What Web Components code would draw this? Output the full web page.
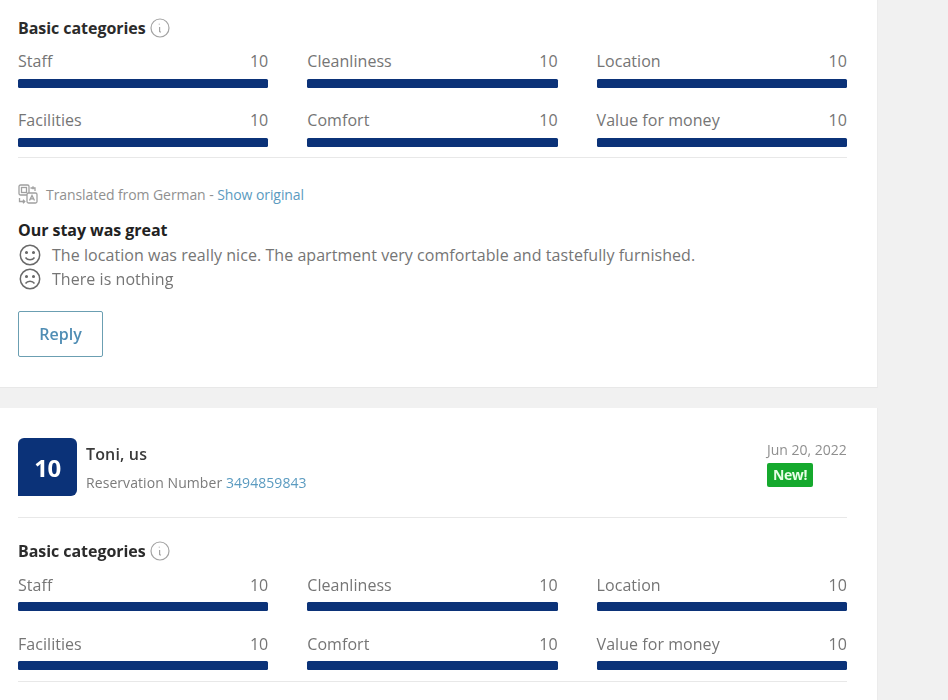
<!DOCTYPE html>
<html lang="en"><head><meta charset="utf-8"><title>Reviews</title>
<style>
html,body{margin:0;height:700px;overflow:hidden;background:#f1f1f1;font-family:"Open Sans","Noto Sans",sans-serif;color:#6b6b6b}
</style></head><body>
<review-list>
<review-card>
  <category-block></category-block>
  <review-body></review-body>
</review-card>
<review-card class="open">
  <review-head name="Toni, us" reservation="3494859843" date="Jun 20, 2022" score="10"></review-head>
  <category-block second></category-block>
</review-card>
</review-list>
<script>
class ReviewList extends HTMLElement{constructor(){super();this.attachShadow({mode:'open'}).innerHTML=`<style>:host{display:flex;flex-direction:column;gap:20px;width:878px;filter:blur(.4px)}</style><slot></slot>`}}
class ReviewCard extends HTMLElement{constructor(){super();this.attachShadow({mode:'open'}).innerHTML=`<style>:host{display:block;background:#fff;padding:0 30px 0 18px;border-bottom:1px solid #e8e8e8;border-right:1px solid #ececec;box-sizing:border-box;width:878px}:host(.open){min-height:320px}</style><slot></slot>`}}
class CategoryBar extends HTMLElement{constructor(){super();this.attachShadow({mode:'open'}).innerHTML=`<style>
:host{display:block}
.r{display:flex;justify-content:space-between;font-size:16px;line-height:22px;height:29px;box-sizing:border-box;padding-top:var(--label-shift,0);color:#757575;letter-spacing:.05px}
.b{height:9px;background:#0b3278;border-radius:1.500px}
</style><div class="r"><span>${this.getAttribute('label')}</span><span>10</span></div><div class="b"></div>`}}
class CategoryBlock extends HTMLElement{constructor(){super();
const items=['Staff','Cleanliness','Location','Facilities','Comfort','Value for money'];
this.attachShadow({mode:'open'}).innerHTML=`<style>
:host{display:block}
:host([second]){--label-shift:1px}
.h{display:flex;align-items:center;gap:4px;height:24px;padding-top:16px;margin-bottom:10px;font-size:16px;font-weight:700;color:#2b2b2b;letter-spacing:-.05px}
:host([second]) .h{padding-top:21px;margin-bottom:10px}
svg{width:20px;height:20px;flex:none}
.g{display:grid;grid-template-columns:repeat(3,250.3px);column-gap:39px;row-gap:21px}
.d{height:1px;background:#e8e8e8;margin-top:10px}
:host([second]) .d{margin-top:11px}
</style><div class="h"><span>Basic categories</span><svg viewBox="0 0 20 20" fill="none" stroke="#a3a3a3"><circle cx="10" cy="10" r="9" stroke-width="1.200"/><path d="M9.300 5.800v.8M9.600 9v4.600l1.300.6" stroke-width="1.200"/></svg></div>
<div class="g">${items.map(i=>`<category-bar label="${i}"></category-bar>`).join('')}</div><div class="d"></div>`}}
class ReviewBody extends HTMLElement{constructor(){super();this.attachShadow({mode:'open'}).innerHTML=`<style>
:host{display:block;height:229px;box-sizing:border-box;padding-top:24px}
.t{display:flex;align-items:center;gap:8px;height:24px;font-size:14px;color:#909090;letter-spacing:-.08px;white-space:nowrap}
.t a{color:#5b9bc0}
.t svg{width:20px;height:20px;flex:none}
h3{margin:12px 0 0;font-size:16px;line-height:24px;height:25px;font-weight:700;color:#222;letter-spacing:-.05px}
.l{display:flex;align-items:center;gap:10px;height:24px;font-size:16px;color:#757575;letter-spacing:.05px;white-space:nowrap}
.l svg{width:24px;height:24px;flex:none}
.btn{display:flex;align-items:center;justify-content:center;width:85px;height:46px;margin-top:20px;box-sizing:border-box;border:1px solid #6b9fb2;border-radius:2px;font-size:16px;font-weight:600;color:#4f8db4}
</style>
<div class="t"><svg viewBox="0 0 20 20" fill="none" stroke="#a0a0a0" stroke-width="1.300"><rect x="1" y="1" width="10" height="10" rx="1.500"/><rect x="9" y="9" width="10" height="10" rx="1.500" fill="#fff"/><rect x="3.500" y="3.500" width="5" height="5"/><path d="M12.500 4h4.500v3M15 2.200v3M11.500 16.500l2.500-5 2.500 5M12.500 14.800h3M1.500 14v3.500h5M5 15.700l1.800 1.800-1.800 1.800"/></svg><span>Translated from German - <a>Show original</a></span></div>
<h3>Our stay was great</h3>
<div class="l"><svg viewBox="0 0 24 24" fill="none" stroke="#6a6a6a" stroke-width="1.500"><circle cx="12" cy="12" r="9.700"/><circle cx="8.500" cy="9.500" r=".8" fill="#6a6a6a"/><circle cx="15.500" cy="9.500" r=".8" fill="#6a6a6a"/><path d="M7.500 14.500c2 3 7 3 9 0"/></svg><span>The location was really nice. The apartment very comfortable and tastefully furnished.</span></div>
<div class="l"><svg viewBox="0 0 24 24" fill="none" stroke="#6a6a6a" stroke-width="1.500"><circle cx="12" cy="12" r="9.700"/><circle cx="8.500" cy="9.500" r=".8" fill="#6a6a6a"/><circle cx="15.500" cy="9.500" r=".8" fill="#6a6a6a"/><path d="M7.500 16.500c2-3 7-3 9 0"/></svg><span>There is nothing</span></div>
<div class="btn">Reply</div>`}}
class ReviewHead extends HTMLElement{constructor(){super();const a=n=>this.getAttribute(n);this.attachShadow({mode:'open'}).innerHTML=`<style>
:host{display:block;height:110px;box-sizing:border-box;padding-top:30px;border-bottom:1px solid #e8e8e8}
.w{display:flex}
.s{width:59px;height:58px;background:#0b3278;color:#fff;border-radius:6px 6px 6px 0;display:flex;align-items:center;justify-content:center;font-size:24px;font-weight:700;letter-spacing:-.5px}
.m{margin-left:9px;flex:1}
.n{font-size:16px;font-weight:600;color:#3a3a3a;line-height:20px;margin-top:6px;letter-spacing:.15px}
.v{font-size:14px;color:#7b7b7b;line-height:20px;margin-top:9px;letter-spacing:.07px}
.v a{color:#5b9bc0}
.r{display:flex;flex-direction:column;align-items:flex-start;width:80px}
.d{font-size:14px;line-height:20px;margin-top:2px;color:#8f8f8f;white-space:nowrap}
.b{margin-top:3px;background:#15a92d;color:#e8ffe8;border-radius:2px;font-size:14px;font-weight:700;line-height:24px;height:24px;width:46px;text-align:center;letter-spacing:-.4px}
</style><div class="w"><div class="s">${a('score')}</div><div class="m"><div class="n">${a('name')}</div><div class="v">Reservation Number <a>${a('reservation')}</a></div></div><div class="r"><div class="d">${a('date')}</div><div class="b">New!</div></div></div>`}}
customElements.define('review-list',ReviewList);
customElements.define('review-card',ReviewCard);
customElements.define('category-bar',CategoryBar);
customElements.define('category-block',CategoryBlock);
customElements.define('review-body',ReviewBody);
customElements.define('review-head',ReviewHead);
</script>
</body></html>
